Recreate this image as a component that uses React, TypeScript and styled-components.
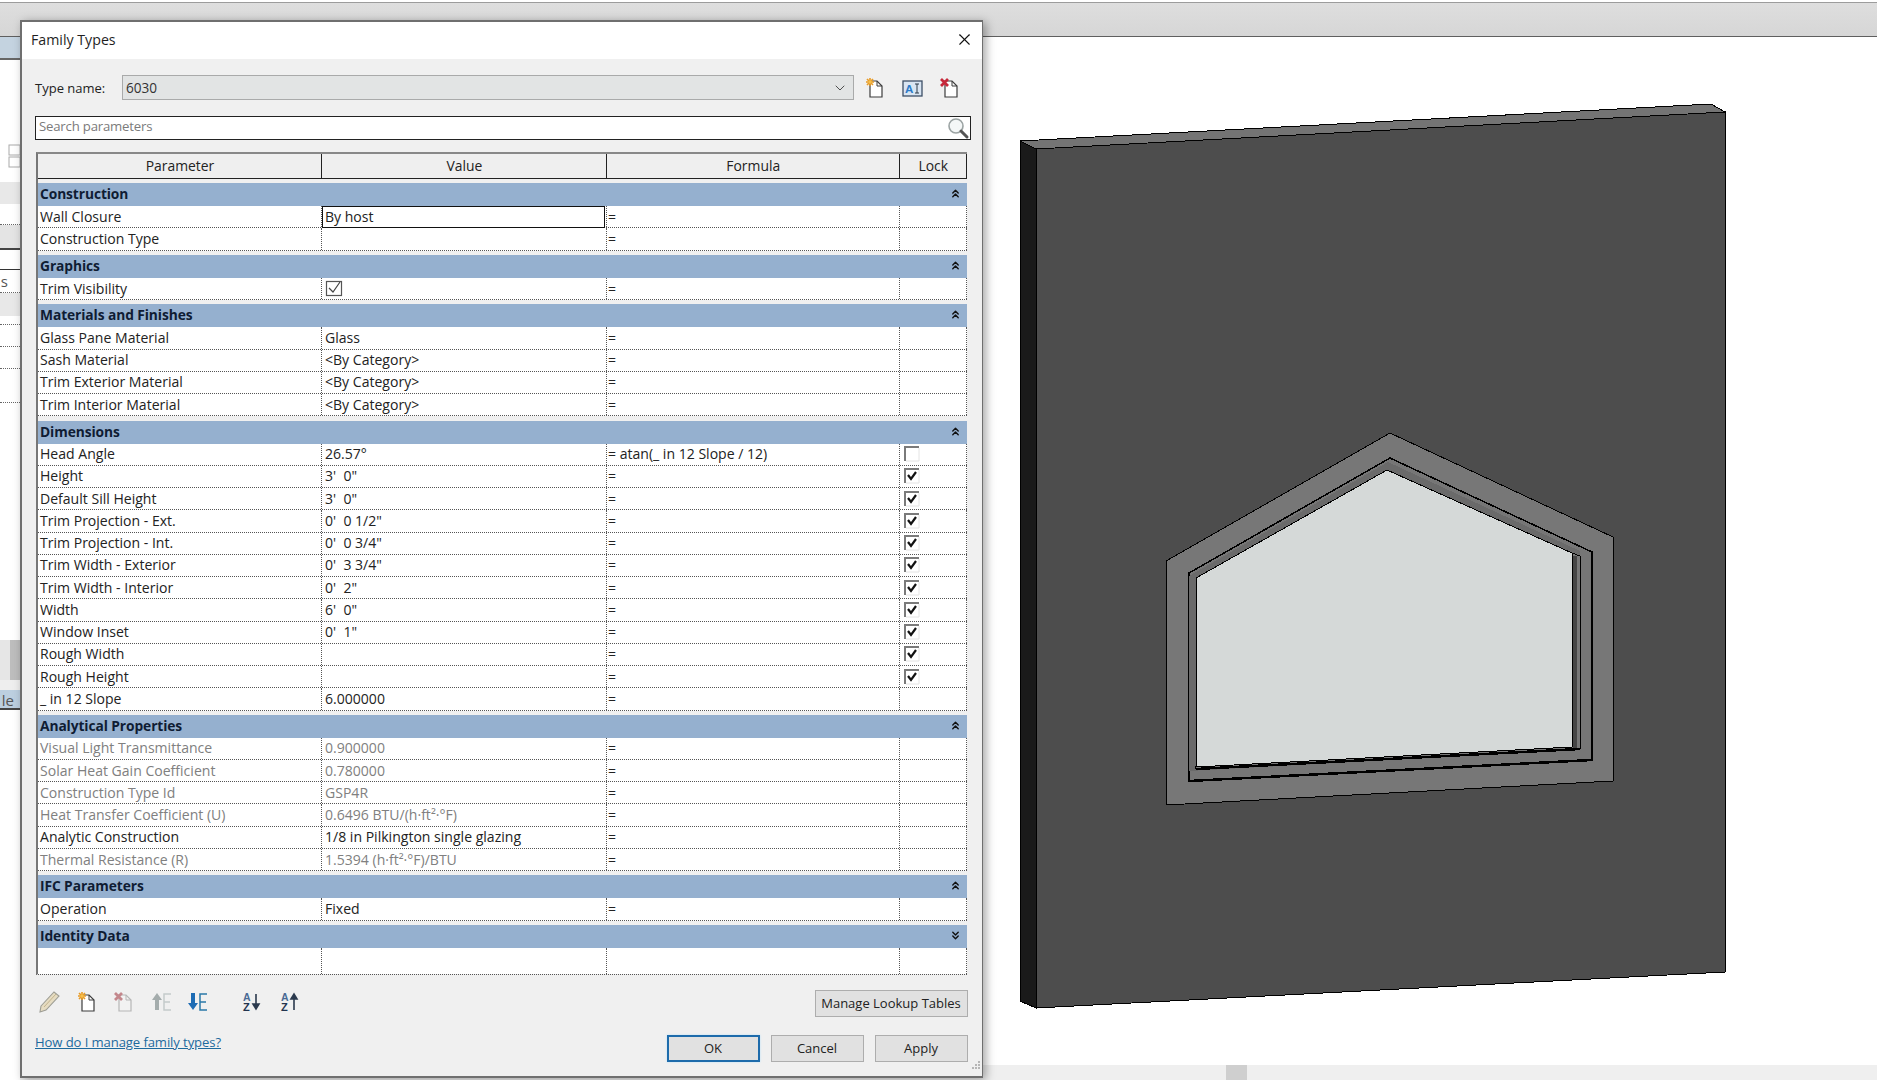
import * as React from 'react'
import styled, { createGlobalStyle } from 'styled-components'
import { ChevronDown, ChevronsDown, ChevronsUp, X } from 'lucide-react'

const GlobalStyle = createGlobalStyle`
  html, body {
    margin: 0;
    padding: 0;
    background: #fff;
    overflow: hidden;
  }
  * {
    box-sizing: border-box;
  }
  body {
    font-family: 'Open Sans', 'Noto Sans', 'Liberation Sans', sans-serif;
    font-size: 13.6px;
    color: #222;
  }
`

const Page = styled.div`
  position: relative;
  width: 1877px;
  height: 1080px;
  display: flex;
  flex-direction: column;
  overflow: hidden;
`

const TopStrip = styled.div`
  height: 35px;
  flex: none;
  background: linear-gradient(#dedede, #d6d6d6);
  border-top: 1px solid #9c9c9c;
  border-bottom: 1px solid #5f5f5f;
  margin-top: 2px;
`

const Workspace = styled.div`
  flex: 1;
  display: flex;
  min-height: 0;
`

const LeftStrip = styled.div`
  width: 20px;
  flex: none;
  display: flex;
  flex-direction: column;
  overflow: hidden;
`

const SideBand = styled.div<{ $h: number; $bg?: string; $line?: string; $textEnd?: number }>`
  height: ${({ $h }) => $h}px;
  flex: none;
  background: ${({ $bg }) => $bg || '#fff'};
  border-bottom: ${({ $line }) => $line || 'none'};
  font-size: 15px;
  line-height: ${({ $h }) => $h}px;
  display: flex;
  justify-content: flex-end;
  padding-right: ${({ $textEnd }) => $textEnd ?? 0}px;
  color: #555;
  white-space: nowrap;
`

const SideThumb = styled.div`
  width: 10px;
  height: 100%;
  background: #bdbdbd;
`

const Main = styled.div`
  flex: 1;
  display: flex;
  flex-direction: column;
  min-width: 0;
`

const Canvas = styled.div`
  flex: 1;
  background: #fff;
  padding: 63px 0 0 995px;
  min-height: 0;
`

const BottomStrip = styled.div`
  height: 15px;
  flex: none;
  background: #efefef;
  padding-left: 1206px;
`

const ScrollThumb = styled.div`
  width: 21px;
  height: 100%;
  background: #cfcfcf;
`

const Dialog = styled.div`
  position: absolute;
  left: 20px;
  top: 20px;
  width: 963px;
  height: 1058px;
  background: #f0f0f0;
  border: 2px solid #6f6f6f;
  border-right-width: 1px;
  box-shadow: 3px 2px 9px rgba(0, 0, 0, 0.35);
  display: flex;
  flex-direction: column;
`

const TitleBar = styled.div`
  height: 37px;
  flex: none;
  background: #fff;
  display: flex;
  align-items: center;
  justify-content: space-between;
  padding: 0 8px 2px 9px;
  font-size: 14.2px;
  color: #1f1f1f;
`

const DialogBody = styled.div`
  flex: 1;
  display: flex;
  flex-direction: column;
  padding: 16px 11px 0 13px;
  position: relative;
`

const TypeRow = styled.div`
  display: flex;
  align-items: center;
  height: 25px;
`

const TypeLabel = styled.div`
  width: 87px;
  flex: none;
  font-size: 13px;
`

const Combo = styled.div`
  width: 732px;
  height: 25px;
  flex: none;
  display: flex;
  align-items: center;
  justify-content: space-between;
  padding: 0 5px 0 3px;
  background: #e2e4e4;
  border: 1px solid #a9aaaa;
  font-size: 13.6px;
  color: #333;
`

const TypeIcon = styled.div<{ $left: number }>`
  margin-left: ${({ $left }) => $left}px;
  flex: none;
  width: 22px;
  height: 22px;
`

const SearchBox = styled.div`
  margin-top: 16px;
  height: 24px;
  display: flex;
  align-items: center;
  justify-content: space-between;
  background: #fff;
  border: 1px solid #222;
  padding: 0 0 0 3px;
  color: #7b7b7b;
  font-size: 13.2px;
  letter-spacing: -0.2px;
`

const SearchHint = styled.span`
  margin-top: -5px;
`

const Table = styled.div`
  margin: 12px 4px 0 1px;
  height: 823px;
  border-left: 2px solid #777;
  border-top: 2px solid #888;
  border-bottom: 1px dotted #555;
  display: flex;
  flex-direction: column;
`

const Columns = styled.div`
  display: grid;
  grid-template-columns: 284px 285px 292.5px 67.5px;
`

const HeaderRow = styled(Columns)`
  height: 25px;
  flex: none;
  background: #efefef;
  border-bottom: 1.5px solid #222;
`

const HeaderCell = styled.div`
  display: flex;
  align-items: center;
  justify-content: center;
  font-size: 13.9px;
  color: #222;
  padding: 0 0 1px 1px;
  border-right: 1.5px solid #222;
`

const GroupHead = styled.div`
  margin-top: 4.2px;
  height: 23px;
  flex: none;
  background: #95b0cf;
  display: flex;
  align-items: center;
  justify-content: space-between;
  padding: 0 5px 2px 2px;
  font-size: 13.8px;
  font-weight: 700;
  color: #0f1c33;
  letter-spacing: -0.1px;
`

const Row = styled(Columns)`
  height: 22.25px;
  flex: none;
  background: #fff;
  border-bottom: 1px dotted #555;
`

const Cell = styled.div<{ $dim?: boolean; $pad?: number }>`
  position: relative;
  display: flex;
  align-items: center;
  padding-left: ${({ $pad }) => $pad ?? 2}px;
  padding-bottom: 1px;
  border-right: 1px dotted #555;
  color: ${({ $dim }) => ($dim ? '#808080' : '#222')};
  font-size: 14.05px;
  white-space: pre;
`

const FocusBox = styled.div`
  position: absolute;
  left: 0;
  top: 0;
  right: 1px;
  bottom: -1px;
  border: 1.5px solid #111;
  background: #fff;
  display: flex;
  align-items: center;
  padding: 0 0 1px 2px;
`

const EmptyFill = styled(Columns)`
  flex: 1;
  background: #fff;
  margin-top: 0;
`

const FooterRow = styled.div<{ $top: number }>`
  margin-top: ${({ $top }) => $top}px;
  display: flex;
  align-items: center;
  justify-content: space-between;
  height: 27px;
`

const Tools = styled.div`
  display: flex;
  align-items: center;
  margin-bottom: 3px;
`

const ToolIcon = styled.div<{ $left: number }>`
  margin-left: ${({ $left }) => $left}px;
  width: 22px;
  height: 22px;
  flex: none;
`

const HelpLink = styled.a`
  color: #1d6a9e;
  font-size: 13.1px;
  text-decoration: underline;
  letter-spacing: -0.1px;
  margin-bottom: 13px;
`

const Buttons = styled.div`
  display: flex;
  gap: 11px;
  margin-right: 3px;
`

const Btn = styled.button<{ $primary?: boolean; $w: number }>`
  width: ${({ $w }) => $w}px;
  height: 27px;
  padding: 0 1px 2px 0;
  font: inherit;
  font-size: 13px;
  color: #222;
  background: #e1e1e1;
  border: ${({ $primary }) => ($primary ? '2px solid #1d6bab' : '1.5px solid #adadad')};
  box-shadow: ${({ $primary }) => ($primary ? '0 0 2px #b8e0f8' : 'none')};
`

const Grip = styled.div`
  position: absolute;
  right: 1px;
  bottom: 2px;
`

type Lock = 'on' | 'off'

interface ParamRow {
  name: string
  value?: string
  formula?: string
  lock?: Lock
  dim?: boolean
  check?: boolean
  focus?: boolean
}

interface Group {
  title: string
  open?: boolean
  rows: ParamRow[]
}

const groups: Group[] = [
  {
    title: 'Construction',
    rows: [
      { name: 'Wall Closure', value: 'By host', focus: true },
      { name: 'Construction Type' },
    ],
  },
  { title: 'Graphics', rows: [{ name: 'Trim Visibility', check: true }] },
  {
    title: 'Materials and Finishes',
    rows: [
      { name: 'Glass Pane Material', value: 'Glass' },
      { name: 'Sash Material', value: '<By Category>' },
      { name: 'Trim Exterior Material', value: '<By Category>' },
      { name: 'Trim Interior Material', value: '<By Category>' },
    ],
  },
  {
    title: 'Dimensions',
    rows: [
      { name: 'Head Angle', value: '26.57°', formula: '= atan(_ in 12 Slope / 12)', lock: 'off' },
      { name: 'Height', value: "3'  0\"", lock: 'on' },
      { name: 'Default Sill Height', value: "3'  0\"", lock: 'on' },
      { name: 'Trim Projection - Ext.', value: "0'  0 1/2\"", lock: 'on' },
      { name: 'Trim Projection - Int.', value: "0'  0 3/4\"", lock: 'on' },
      { name: 'Trim Width - Exterior', value: "0'  3 3/4\"", lock: 'on' },
      { name: 'Trim Width - Interior', value: "0'  2\"", lock: 'on' },
      { name: 'Width', value: "6'  0\"", lock: 'on' },
      { name: 'Window Inset', value: "0'  1\"", lock: 'on' },
      { name: 'Rough Width', lock: 'on' },
      { name: 'Rough Height', lock: 'on' },
      { name: '_ in 12 Slope', value: '6.000000' },
    ],
  },
  {
    title: 'Analytical Properties',
    rows: [
      { name: 'Visual Light Transmittance', value: '0.900000', dim: true },
      { name: 'Solar Heat Gain Coefficient', value: '0.780000', dim: true },
      { name: 'Construction Type Id', value: 'GSP4R', dim: true },
      { name: 'Heat Transfer Coefficient (U)', value: '0.6496 BTU/(h·ft²·°F)', dim: true },
      { name: 'Analytic Construction', value: '1/8 in Pilkington single glazing' },
      { name: 'Thermal Resistance (R)', value: '1.5394 (h·ft²·°F)/BTU', dim: true },
    ],
  },
  { title: 'IFC Parameters', rows: [{ name: 'Operation', value: 'Fixed' }] },
  { title: 'Identity Data', open: false, rows: [] },
]

const LockBox = ({ on }: { on: boolean }) => (
  <svg width="17" height="17" viewBox="0 0 17 17">
    <path d="M2 16V2h14" fill="none" stroke="#7a7a7a" strokeWidth="2" />
    <path d="M3 16h13V3" fill="none" stroke="#e4e4e4" strokeWidth="1" />
    {on && <path d="M5 8l3 4 5-7" fill="none" stroke="#111" strokeWidth="2.2" />}
  </svg>
)

const TrimCheck = () => (
  <svg width="18" height="18" viewBox="0 0 18 18">
    <rect x="1.5" y="2.5" width="15" height="14" fill="#fff" stroke="#555" strokeWidth="1.2" />
    <path d="M4 9l4 4 7-10" fill="none" stroke="#444" strokeWidth="1.2" />
  </svg>
)

const DocIcon = ({ mark, faded }: { mark: 'star' | 'cross'; faded?: boolean }) => (
  <svg width="22" height="22" viewBox="0 0 22 22" opacity={faded ? 0.55 : 1}>
    <path
      d="M6 4h7l5 5v11H6z"
      fill={faded ? '#f4f4f4' : '#fff'}
      stroke={faded ? '#888' : '#3c3c3c'}
      strokeWidth="1.2"
    />
    <path d="M13 4v5h5" fill="none" stroke={faded ? '#888' : '#3c3c3c'} strokeWidth="1" />
    {mark === 'star' ? (
      <g stroke="#e89a24" strokeWidth="1.6">
        <path d="M6 1v8M2 5h8M3 2l6 6M9 2l-6 6" />
        <circle cx="6" cy="5" r="1.8" fill="#f6c04c" stroke="none" />
      </g>
    ) : (
      <path d="M2 2l7 7M9 2l-7 7" stroke={faded ? '#a0323c' : '#c6283a'} strokeWidth="2.8" />
    )}
  </svg>
)

const RenameIcon = () => (
  <svg width="22" height="22" viewBox="0 0 22 22">
    <rect x="1" y="4" width="19" height="15" fill="#d9e5f2" stroke="#3d4f66" strokeWidth="1.3" />
    <text x="3" y="16" fontFamily="Liberation Sans, sans-serif" fontWeight="700" fontSize="11.5" fill="#2a7ac8">
      A
    </text>
    <path d="M13 7h4M15 7v9M13 16h4" stroke="#2d3a48" strokeWidth="1" fill="none" />
  </svg>
)

const SearchIcon = () => (
  <svg width="24" height="24" viewBox="0 0 24 24">
    <circle cx="10" cy="10" r="7" fill="#f4f7f7" stroke="#9ba3a3" strokeWidth="1.6" />
    <path d="M15 15l6 6" stroke="#555" strokeWidth="3" strokeLinecap="round" />
  </svg>
)

const PencilIcon = () => (
  <svg width="22" height="22" viewBox="0 0 22 22">
    <path d="M3 15L16 1l5 4L8 19l-6 2z" fill="#e6dcc2" stroke="#9d9d94" strokeWidth="1.1" />
    <path d="M6 16L18 3" stroke="#c3b48c" strokeWidth="1" />
  </svg>
)

const MoveIcon = ({ dir, on }: { dir: 'up' | 'down'; on?: boolean }) => {
  const arrow = on ? '#1e6cb4' : '#a4acac'
  const bars = on ? '#2a78a8' : '#c4caca'
  return (
    <svg width="22" height="22" viewBox="0 0 22 22">
      {dir === 'up' ? (
        <path d="M6 2l5 7H8v10H4V9H1z" fill={arrow} />
      ) : (
        <path d="M4 2h4v10h3l-5 7-5-7h3z" fill={arrow} />
      )}
      <path d="M20 3h-7v16h7M13 11h6" fill="none" stroke={bars} strokeWidth="1.5" />
    </svg>
  )
}

const SortIcon = ({ dir }: { dir: 'down' | 'up' }) => (
  <svg width="22" height="22" viewBox="0 0 22 22">
    <text x="1" y="10" fontFamily="Liberation Sans, sans-serif" fontWeight="700" fontSize="10.5" fill="#4a6a94">
      A
    </text>
    <text x="1" y="20" fontFamily="Liberation Sans, sans-serif" fontWeight="700" fontSize="11" fill="#22344e">
      Z
    </text>
    {dir === 'down' ? (
      <path d="M14 3v13M11 13l3 5 3-5z" stroke="#2b3a4e" strokeWidth="1.6" fill="#2b3a4e" />
    ) : (
      <path d="M14 19V6M11 8l3-5 3 5z" stroke="#2b3a4e" strokeWidth="1.6" fill="#2b3a4e" />
    )}
  </svg>
)

const GripIcon = () => (
  <svg width="9" height="9" viewBox="0 0 9 9" fill="#b6b6b6">
    <rect x="6" y="0" width="2" height="2" />
    <rect x="3" y="3" width="2" height="2" />
    <rect x="6" y="3" width="2" height="2" />
    <rect x="0" y="6" width="2" height="2" />
    <rect x="3" y="6" width="2" height="2" />
    <rect x="6" y="6" width="2" height="2" />
  </svg>
)

const WallDrawing = () => (
  <svg width="720" height="920" viewBox="1015 100 720 920" shapeRendering="crispEdges">
    {/* wall */}
    <polygon points="1020,141 1036,149 1036,1008 1020,1001" fill="#1a1a1a" stroke="#000" />
    <polygon points="1020,141 1711,104 1725,112 1036,149" fill="#747474" stroke="#000" />
    <polygon points="1036,149 1725,112 1725,972 1036,1008" fill="#4d4d4d" stroke="#000" />
    {/* outer trim */}
    <polygon points="1390,433 1613,537 1613,781 1166,805 1166,561" fill="#777" stroke="#000" />
    {/* inner trim */}
    <polygon points="1390,458 1592,552 1592,760 1189,781 1189,573" fill="#767676" stroke="#000" strokeWidth="1.5" />
    <polygon points="1388,462 1580,551 1580,750 1189,771 1189,576" fill="#6a6a6a" stroke="none" />
    <polyline points="1189,781 1592,760 1592,552" fill="none" stroke="#000" strokeWidth="2.5" />
    <polygon points="1195,769 1580,749 1580,556 1572,553 1572,747 1195,767" fill="#777" stroke="#000" />
    <rect x="1573" y="556" width="4" height="192" fill="#454545" />
    {/* glass */}
    <polygon points="1387,470 1572,553 1572,747 1196,767 1196,578" fill="#d5d9d8" stroke="#000" />
    <polyline points="1196,769 1580,749" fill="none" stroke="#000" strokeWidth="2.5" />
  </svg>
)

const Row_ = ({ row }: { row: ParamRow }) => (
  <Row>
    <Cell $dim={row.dim}>{row.name}</Cell>
    <Cell $dim={row.dim} $pad={3}>
      {row.focus ? <FocusBox>{row.value}</FocusBox> : row.check ? <TrimCheck /> : row.value}
    </Cell>
    <Cell $pad={1}>{row.formula || '='}</Cell>
    <Cell $pad={3}>{row.lock && <LockBox on={row.lock === 'on'} />}</Cell>
  </Row>
)

const App: React.FC = () => {
  return (
    <Page>
      <GlobalStyle />
      <TopStrip />
      <Workspace>
        <LeftStrip>
          <SideBand $h={23} $bg="#c4d3e0" $line="2px solid #666" />
          <SideBand $h={81} />
          <SideBand $h={34} $bg="#fff">
            <svg width="12" height="34" viewBox="0 0 12 34">
              <rect x="1" y="4" width="11" height="10" fill="none" stroke="#aaa" />
              <rect x="1" y="16" width="11" height="10" fill="none" stroke="#aaa" />
            </svg>
          </SideBand>
          <SideBand $h={7} $bg="#fff" />
          <SideBand $h={22} $bg="#e8e8e8" />
          <SideBand $h={21} $line="1px dotted #666" />
          <SideBand $h={25} $bg="#e4e4e4" $line="2px solid #444" />
          <SideBand $h={20} $line="1px solid #333" />
          <SideBand $h={23} $line="1px dotted #666" $textEnd={12}>
            <span>s</span>
          </SideBand>
          <SideBand $h={23} $bg="#e8e8e8" />
          <SideBand $h={9} $line="1px dotted #666" />
          <SideBand $h={22} $line="1px dotted #666" />
          <SideBand $h={22} $line="1px dotted #666" />
          <SideBand $h={34} $line="1px dotted #666" />
          <SideBand $h={237} />
          <SideBand $h={40} $bg="#e6e6e6">
            <SideThumb />
          </SideBand>
          <SideBand $h={10} $bg="#eee" />
          <SideBand $h={20} $bg="#bccfe0" $line="2px solid #444" $textEnd={6}>
            <span>le</span>
          </SideBand>
        </LeftStrip>
        <Main>
          <Canvas>
            <WallDrawing />
          </Canvas>
          <BottomStrip>
            <ScrollThumb />
          </BottomStrip>
        </Main>
      </Workspace>

      <Dialog>
        <TitleBar>
          <span>Family Types</span>
          <X size={19} strokeWidth={1.4} color="#111" />
        </TitleBar>
        <DialogBody>
          <TypeRow>
            <TypeLabel>Type name:</TypeLabel>
            <Combo>
              <span>6030</span>
              <ChevronDown size={16} strokeWidth={1.4} color="#444" />
            </Combo>
            <TypeIcon $left={10}>
              <DocIcon mark="star" />
            </TypeIcon>
            <TypeIcon $left={16}>
              <RenameIcon />
            </TypeIcon>
            <TypeIcon $left={15}>
              <DocIcon mark="cross" />
            </TypeIcon>
          </TypeRow>
          <SearchBox>
            <SearchHint>Search parameters</SearchHint>
            <SearchIcon />
          </SearchBox>
          <Table>
            <HeaderRow>
              <HeaderCell>Parameter</HeaderCell>
              <HeaderCell>Value</HeaderCell>
              <HeaderCell>Formula</HeaderCell>
              <HeaderCell>Lock</HeaderCell>
            </HeaderRow>
            {groups.map((g) => (
              <React.Fragment key={g.title}>
                <GroupHead>
                  <span>{g.title}</span>
                  {g.open === false ? (
                    <ChevronsDown size={13} strokeWidth={2.6} color="#111" />
                  ) : (
                    <ChevronsUp size={13} strokeWidth={2.6} color="#111" />
                  )}
                </GroupHead>
                {g.rows.map((r) => (
                  <Row_ key={r.name} row={r} />
                ))}
              </React.Fragment>
            ))}
            <EmptyFill>
              <Cell />
              <Cell />
              <Cell />
              <Cell />
            </EmptyFill>
          </Table>
          <FooterRow $top={15}>
            <Tools>
              <ToolIcon $left={3}>
                <PencilIcon />
              </ToolIcon>
              <ToolIcon $left={16}>
                <DocIcon mark="star" />
              </ToolIcon>
              <ToolIcon $left={15}>
                <DocIcon mark="cross" faded />
              </ToolIcon>
              <ToolIcon $left={16}>
                <MoveIcon dir="up" />
              </ToolIcon>
              <ToolIcon $left={14}>
                <MoveIcon dir="down" on />
              </ToolIcon>
              <ToolIcon $left={33}>
                <SortIcon dir="down" />
              </ToolIcon>
              <ToolIcon $left={16}>
                <SortIcon dir="up" />
              </ToolIcon>
            </Tools>
            <Buttons>
              <Btn $w={153}>Manage Lookup Tables</Btn>
            </Buttons>
          </FooterRow>
          <FooterRow $top={18}>
            <HelpLink href="#">How do I manage family types?</HelpLink>
            <Buttons>
              <Btn $w={93} $primary>
                OK
              </Btn>
              <Btn $w={93}>Cancel</Btn>
              <Btn $w={93}>Apply</Btn>
            </Buttons>
          </FooterRow>
          <Grip>
            <GripIcon />
          </Grip>
        </DialogBody>
      </Dialog>
    </Page>
  )
}

export default App
